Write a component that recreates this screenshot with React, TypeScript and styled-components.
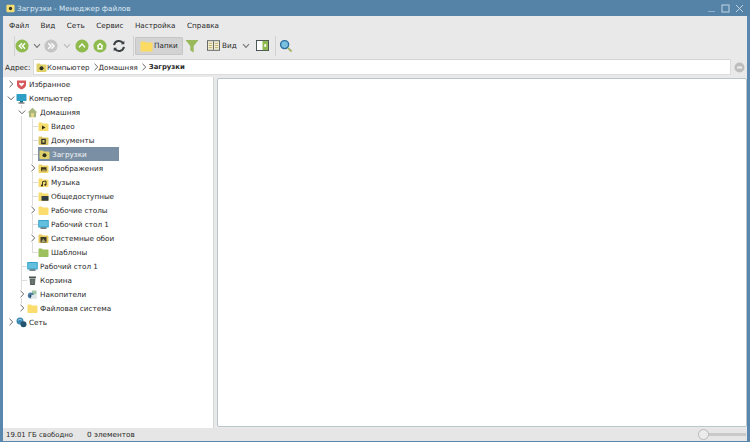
import React from "react";
import styled, { createGlobalStyle } from "styled-components";

const Global = createGlobalStyle`
  html, body { margin: 0; padding: 0; height: 100%; overflow: hidden; }
  #root { height: 100%; }
  * { box-sizing: border-box; }
`;

const Win = styled.div`
  width: 750px; height: 442px; display: flex; flex-direction: column;
  background: #e9e9e9; color: #2a2a2a;
  font: 7.25px "DejaVu Sans", sans-serif;
  text-rendering: geometricPrecision;
  border-style: solid; border-color: #5a87ad; border-width: 0 3px 1px 3px;
`;
const TitleBar = styled.div`
  height: 16px; margin: 0 -3px; padding: 0 6px 0 6px; display: flex; align-items: center; gap: 2px;
  color: #dfe9f0; background: #5583a8;
`;
const TitleText = styled.span` flex: 1; `;
const WinBtns = styled.div` display: flex; gap: 5px; align-items: center; `;
const MenuBar = styled.div`
  height: 17px; display: flex; align-items: center; gap: 11.5px; padding: 1px 0 0 6px;
`;
const Toolbar = styled.div`
  height: 25px; display: flex; align-items: center; padding-left: 11px;
`;
const Handle = styled.div<{ $mr?: number; $ml?: number }>`
  width: 1px; height: 20px; background: #d2d2d2; flex: none;
  margin-left: ${p => p.$ml ?? 0}px; margin-right: ${p => p.$mr ?? 0}px;
`;
const ToolBtn = styled.div<{ $w?: number; $ml?: number }>`
  width: ${p => p.$w ?? 14}px; height: 16px; display: flex; align-items: center; justify-content: center; flex: none;
  margin-left: ${p => p.$ml ?? 0}px;
`;
const Caret = styled.div<{ $w?: number }>`
  width: ${p => p.$w ?? 11}px; display: flex; justify-content: center; flex: none;
`;
const PressedBtn = styled.div`
  width: 48px; height: 18px; margin-left: 1px; padding-left: 4px; display: flex; align-items: center; gap: 1px; flex: none;
  background: #d3d3d3; border: 1px solid #c6c6c6; border-radius: 1px;
`;
const ViewLabel = styled.span` margin-left: 2px; width: 14px; flex: none; `;
const AddressBar = styled.div`
  height: 18px; display: flex; align-items: center; padding-left: 2px;
`;
const AddressLabel = styled.span` width: 28px; flex: none; `;
const AddressField = styled.div`
  width: 698px; height: 16px; background: #fff; display: flex; align-items: center; padding-left: 2px;
  border: 1px solid #dcdcdc; border-top-color: #d4d4d4; border-radius: 1px;
`;
const Crumb = styled.span<{ $bold?: boolean }>`
  font-weight: ${p => (p.$bold ? 700 : 400)};
  font-size: ${p => (p.$bold ? 6.9 : 7.1)}px;
`;
const CrumbSep = styled.span<{ $r: number }>` margin: 0 ${p => p.$r}px 0 2px; display: flex; `;
const ClearBtn = styled.div` margin-left: 3px; display: flex; `;
const Panes = styled.div`
  flex: 1; min-height: 0; display: flex; padding: 1px 0 0 0;
`;
const SidePane = styled.div`
  width: 211px; background: #fff; flex: none; padding-left: 2px; border-right: 1px solid #cfd6d6;
`;
const MainPane = styled.div`
  flex: 1; margin: 1px 0 1px 3px; background: #fff; border: 1px solid #b9c6c9; border-radius: 2px;
`;
const StatusBar = styled.div`
  height: 13px; display: flex; align-items: center; padding: 0 1px 0 3px; gap: 14px; flex: none;
  background: #e6e6e6;
`;
const StatusFree = styled.span` font-size: 6.9px; `;
const StatusSpacer = styled.div` flex: 1; `;
const Slider = styled.div`
  width: 48px; height: 11px; display: flex; align-items: center; position: relative;
`;
const SliderTrack = styled.div` height: 3px; flex: 1; background: #c9c9c9; `;
const SliderThumb = styled.div`
  position: absolute; left: 0; top: 0; width: 11px; height: 11px; border-radius: 50%;
  background: #ececec; border: 1.5px solid #b9b9b9;
`;

const Row = styled.div<{ $connector?: boolean }>`
  position: relative; height: 14px; display: flex; align-items: center; width: max-content;
  ${p => p.$connector ? `&::before { content: ""; position: absolute; left: 5px; top: 7px; width: 6px; height: 1px; background: #dcdcdc; }` : ""}
`;
const Arrow = styled.div`
  width: 11px; flex: none; display: flex; justify-content: center; position: relative; z-index: 1;
`;
const ArrowMask = styled.div` background: #fff; display: flex; `;
const Label = styled.div<{ $selected?: boolean }>`
  display: flex; align-items: center; height: 14px; gap: 2px;
  ${p => p.$selected ? `background: #7a8fa3; color: #f2f5f8; width: 81px; margin-left: 0; padding-left: 1px;` : ""}
`;
const IconBox = styled.div` width: 11px; height: 11px; flex: none; display: flex; `;
const Group = styled.div`
  position: relative; padding-left: 11px;
  &::before { content: ""; position: absolute; left: 16px; top: 0; bottom: 7px; width: 1px; background: #dcdcdc; }
`;

const Chevron = ({ dir, color = "#666" }: { dir: "r" | "d"; color?: string }) => (
  <svg width="8" height="8" viewBox="0 0 8 8" fill="none" stroke={color} strokeWidth="1">
    {dir === "r" ? <path d="M2.5 .8 5.8 4 2.5 7.2" /> : <path d="M.8 2.5 4 5.8 7.2 2.5" />}
  </svg>
);
const SmallCaret = ({ color = "#777" }: { color?: string }) => (
  <svg width="8" height="6" viewBox="0 0 8 6" fill="none" stroke={color} strokeWidth="1.1"><path d="M1 1.2 4 4.4 7 1.2" /></svg>
);

type IconKind = "fav" | "pc" | "home" | "video" | "docs" | "down" | "img" | "music" | "pub" | "folder" | "desk" | "wall" | "tmpl" | "trash" | "drive" | "net";

const Folder = ({ fill = "#f6dc6c", children }: { fill?: string; children?: React.ReactNode }) => (
  <svg width="11" height="11" viewBox="0 0 11 11">
    <path d="M.5 2.2c0-.4.3-.7.7-.7h2.6l1 1h5c.4 0 .7.3.7.7v6c0 .4-.3.7-.7.7H1.200c-.4 0-.7-.3-.7-.7z" fill={fill} />
    {children}
  </svg>
);

const TreeIcon = ({ kind }: { kind: IconKind }) => {
  switch (kind) {
    case "fav":
      return (
        <svg width="11" height="11" viewBox="0 0 11 11">
          <path d="M1 1.500h9v4.500c0 2-2.500 3.500-4.500 4.500C3.500 9.500 1 8 1 6z" fill="#d8575b" />
          <path d="M5.500 7.500 3.200 5.300c-1-1.200.8-2.500 2.300-1 1.500-1.500 3.300-.2 2.300 1z" fill="#f5f5f5" />
        </svg>
      );
    case "pc":
      return (
        <svg width="11" height="11" viewBox="0 0 11 11">
          <rect x=".5" y="1" width="10" height="7" rx=".8" fill="#2e9fc4" />
          <rect x="4" y="8" width="3" height="1.500" fill="#1c6f8c" />
          <rect x="2.500" y="9.500" width="6" height="1" fill="#444" />
        </svg>
      );
    case "home":
      return (
        <svg width="11" height="11" viewBox="0 0 11 11">
          <path d="M5.500 .8 .6 5.500h1.400v4.700h7V5.500h1.400z" fill="#a9b77f" />
          <rect x="4.200" y="6" width="2.600" height="4.200" fill="#e9d98a" />
        </svg>
      );
    case "video":
      return <Folder><path d="M4 4.500 7.500 6.500 4 8.500z" fill="#2b2b1a" /></Folder>;
    case "docs":
      return <Folder fill="#d9c766"><rect x="3.200" y="3.800" width="4.600" height="5.400" fill="#34352a" /><rect x="4.500" y="5" width="2" height="2.600" fill="#d9c766" /></Folder>;
    case "down":
      return <Folder fill="#dfd168"><circle cx="5.500" cy="6.200" r="2" fill="#2d3222" /></Folder>;
    case "img":
      return <Folder fill="#eed66a"><rect x="3" y="4.200" width="5.500" height="4" fill="#3e3a22" /><path d="M3.500 8 5 6l1 1 1-1 1 2z" fill="#bda24c" /></Folder>;
    case "music":
      return <Folder><path d="M4.500 8.500V4.700L8 4v3.600" stroke="#2c2c20" fill="none" strokeWidth=".9" /><circle cx="3.900" cy="8.500" r="1" fill="#2c2c20" /><circle cx="7.300" cy="7.700" r="1" fill="#2c2c20" /></Folder>;
    case "pub":
      return <Folder><rect x="3.500" y="5" width="7" height="4.800" rx=".5" fill="#2f3c42" /></Folder>;
    case "folder":
      return <Folder fill="#fbdc6f" />;
    case "desk":
      return (
        <svg width="11" height="11" viewBox="0 0 11 11">
          <rect x=".2" y="1" width="10.600" height="7.500" rx=".6" fill="#35a3cb" />
          <rect x="1.200" y="2" width="8.600" height="5.500" fill="#62bfdd" />
          <rect x="2.500" y="8.500" width="6" height="1.200" fill="#3b4a52" />
        </svg>
      );
    case "wall":
      return <Folder fill="#e8c95e"><rect x="2.500" y="4" width="6" height="5.500" fill="#3c3d2c" /><path d="M3 9 5.200 5.800 8 9z" fill="#a5a36b" /></Folder>;
    case "tmpl":
      return <Folder fill="#9cc05e" />;
    case "trash":
      return (
        <svg width="11" height="11" viewBox="0 0 11 11">
          <rect x="2" y="1.500" width="7" height="1.600" fill="#4a5353" />
          <path d="M2.600 3.400h5.800l-.5 6.600H3.100z" fill="#566060" />
          <path d="M4 4.500v4.500M5.500 4.500v4.500M7 4.500v4.500" stroke="#87908f" strokeWidth=".5" />
        </svg>
      );
    case "drive":
      return (
        <svg width="11" height="11" viewBox="0 0 11 11">
          <path d="M5 1.500h4.500v4H5z" fill="#9fc6a4" />
          <circle cx="3.800" cy="6.500" r="3" fill="#4f7fa8" />
          <rect x="4" y="6" width="6" height="3.800" rx=".5" fill="#dfe6e8" />
          <circle cx="3.500" cy="7" r="1" fill="#1f3d57" />
        </svg>
      );
    case "net":
      return (
        <svg width="11" height="11" viewBox="0 0 11 11">
          <circle cx="4" cy="4" r="3.500" fill="#3c88b4" />
          <circle cx="7.500" cy="7.200" r="3" fill="#24536f" />
          <path d="M2 3.500c1-1.500 3-1.500 4 0" stroke="#bfe0ee" strokeWidth=".7" fill="none" />
        </svg>
      );
  }
};

type TreeItem = { label: string; icon: IconKind; open?: boolean; leaf?: boolean; selected?: boolean; children?: TreeItem[] };

const tree: TreeItem[] = [
  { label: "Избранное", icon: "fav" },
  {
    label: "Компьютер", icon: "pc", open: true, children: [
      {
        label: "Домашняя", icon: "home", open: true, children: [
          { label: "Видео", icon: "video", leaf: true },
          { label: "Документы", icon: "docs", leaf: true },
          { label: "Загрузки", icon: "down", leaf: true, selected: true },
          { label: "Изображения", icon: "img" },
          { label: "Музыка", icon: "music", leaf: true },
          { label: "Общедоступные", icon: "pub", leaf: true },
          { label: "Рабочие столы", icon: "folder" },
          { label: "Рабочий стол 1", icon: "desk", leaf: true },
          { label: "Системные обои", icon: "wall" },
          { label: "Шаблоны", icon: "tmpl", leaf: true },
        ],
      },
      { label: "Рабочий стол 1", icon: "desk", leaf: true },
      { label: "Корзина", icon: "trash", leaf: true },
      { label: "Накопители", icon: "drive" },
      { label: "Файловая система", icon: "folder" },
    ],
  },
  { label: "Сеть", icon: "net" },
];

const TreeNode = ({ node, depth }: { node: TreeItem; depth: number }) => (
  <>
    <Row $connector={depth > 0 && !!node.leaf}>
      <Arrow>{!node.leaf && <ArrowMask><Chevron dir={node.open ? "d" : "r"} /></ArrowMask>}</Arrow>
      <Label $selected={node.selected}>
        <IconBox><TreeIcon kind={node.icon} /></IconBox>
        {node.label}
      </Label>
    </Row>
    {node.children && (
      <Group>
        {node.children.map(c => <TreeNode key={c.label} node={c} depth={depth + 1} />)}
      </Group>
    )}
  </>
);

const Round = ({ fill, children }: { fill: string; children: React.ReactNode }) => (
  <svg width="14" height="14" viewBox="0 0 15 15">
    <circle cx="7.500" cy="7.500" r="7" fill={fill} />
    <g fill="none" stroke="#fff" strokeWidth="1.500">{children}</g>
  </svg>
);

const App = () => (
  <>
    <Global />
    <Win>
      <TitleBar>
        <svg width="9" height="9" viewBox="0 0 11 10">
          <rect x=".5" y=".5" width="10" height="9" rx="1" fill="#f4dd74" />
          <circle cx="5.500" cy="5" r="2" fill="#33351f" />
        </svg>
        <TitleText>Загрузки - Менеджер файлов</TitleText>
        <WinBtns>
          <svg width="9" height="9" viewBox="0 0 9 9" fill="none" stroke="#8fb0ca"><path d="M1 7.500h7" /></svg>
          <svg width="9" height="9" viewBox="0 0 9 9" fill="none" stroke="#c3d5e3"><rect x="1" y="1" width="7" height="7" /></svg>
          <svg width="9" height="9" viewBox="0 0 9 9" fill="none" stroke="#c3d5e3"><path d="M1 1l7 7M8 1 1 8" /></svg>
        </WinBtns>
      </TitleBar>
      <MenuBar>
        <span>Файл</span><span>Вид</span><span>Сеть</span><span>Сервис</span><span>Настройка</span><span>Справка</span>
      </MenuBar>
      <Toolbar>
        <Handle />
        <ToolBtn><Round fill="#8fbb4e"><path d="M7.500 4.500 4.500 7.500l3 3M10.800 4.500l-3 3 3 3" /></Round></ToolBtn>
        <Caret $w={15}><SmallCaret /></Caret>
        <ToolBtn><Round fill="#c4c4c4"><path d="M4.500 4.500l3 3-3 3M7.800 4.500l3 3-3 3" /></Round></ToolBtn>
        <Caret $w={17}><SmallCaret color="#bbb" /></Caret>
        <ToolBtn><Round fill="#8fbb4e"><path d="M4.300 9 7.500 5.500 10.700 9" /></Round></ToolBtn>
        <ToolBtn $w={22}><Round fill="#8fbb4e"><path d="M4.500 7.800 7.500 5l3 2.800M5.500 7.500v3h4v-3" /></Round></ToolBtn>
        <ToolBtn $w={16}>
          <svg width="14" height="14" viewBox="0 0 15 15" fill="none" stroke="#3c4144" strokeWidth="2.200">
            <path d="M2.200 6.500A5.400 5.400 0 0 1 12 4.500" /><path d="M12.800 8.500A5.400 5.400 0 0 1 3 10.500" />
            <path d="M13.200 1.800v3.800H9.600z" fill="#3c4144" stroke="none" /><path d="M1.800 13.200V9.400h3.600z" fill="#3c4144" stroke="none" />
          </svg>
        </ToolBtn>
        <Handle $ml={6} />
        <PressedBtn>
          <svg width="13" height="12" viewBox="0 0 13 12"><path d="M.5 1.500h4.500l1 1h6.500v9H.5z" fill="#fbdb63" /></svg>
          <span>Папки</span>
        </PressedBtn>
        <ToolBtn $w={18}>
          <svg width="14" height="14" viewBox="0 0 14 14"><path d="M.5 1h13L8.700 7v6.500L5.300 11.500V7z" fill="#9ab85c" /></svg>
        </ToolBtn>
        <ToolBtn $w={13} $ml={6}>
          <svg width="13" height="11" viewBox="0 0 15 12">
            <rect x=".5" y=".5" width="14" height="11" fill="#f4efd4" stroke="#52575a" />
            <path d="M7.500 1v10" stroke="#52575a" />
            <path d="M2 3.500h4M2 6h4M2 8.500h4M9 3.500h4M9 6h4M9 8.500h4" stroke="#b5a866" />
          </svg>
        </ToolBtn>
        <ViewLabel>Вид</ViewLabel>
        <Caret $w={20}><SmallCaret /></Caret>
        <ToolBtn $w={13}>
          <svg width="13" height="11" viewBox="0 0 14 12">
            <rect x=".5" y=".5" width="13" height="11" fill="#fff" stroke="#3f4a4a" />
            <rect x="7" y="1" width="6" height="10" fill="#8fb84f" />
            <rect x="9" y="4.500" width="2" height="3" fill="#fff" />
          </svg>
        </ToolBtn>
        <Handle $ml={6} $mr={3} />
        <ToolBtn>
          <svg width="14" height="14" viewBox="0 0 15 15" fill="none">
            <circle cx="6" cy="6" r="4.300" fill="#7cc0e0" stroke="#2a6f9e" strokeWidth="1.500" />
            <path d="M9.500 9.500l4 4" stroke="#a9b26b" strokeWidth="2.200" />
          </svg>
        </ToolBtn>
      </Toolbar>
      <AddressBar>
        <AddressLabel>Адрес:</AddressLabel>
        <AddressField>
          <IconBox><TreeIcon kind="down" /></IconBox>
          <Crumb>Компьютер</Crumb>
          <CrumbSep $r={-1}><Chevron dir="r" /></CrumbSep>
          <Crumb>Домашняя</Crumb>
          <CrumbSep $r={1}><Chevron dir="r" /></CrumbSep>
          <Crumb $bold>Загрузки</Crumb>
        </AddressField>
        <ClearBtn>
          <svg width="11" height="11" viewBox="0 0 11 11">
            <circle cx="5.500" cy="5.500" r="5" fill="#bdbdbd" />
            <rect x="3" y="4.500" width="5" height="2" fill="#eee" />
          </svg>
        </ClearBtn>
      </AddressBar>
      <Panes>
        <SidePane>
          {tree.map(n => <TreeNode key={n.label} node={n} depth={0} />)}
        </SidePane>
        <MainPane />
      </Panes>
      <StatusBar>
        <StatusFree>19.01 ГБ свободно</StatusFree>
        <span>0 элементов</span>
        <StatusSpacer />
        <Slider><SliderTrack /><SliderThumb /></Slider>
      </StatusBar>
    </Win>
  </>
);

export default App;
